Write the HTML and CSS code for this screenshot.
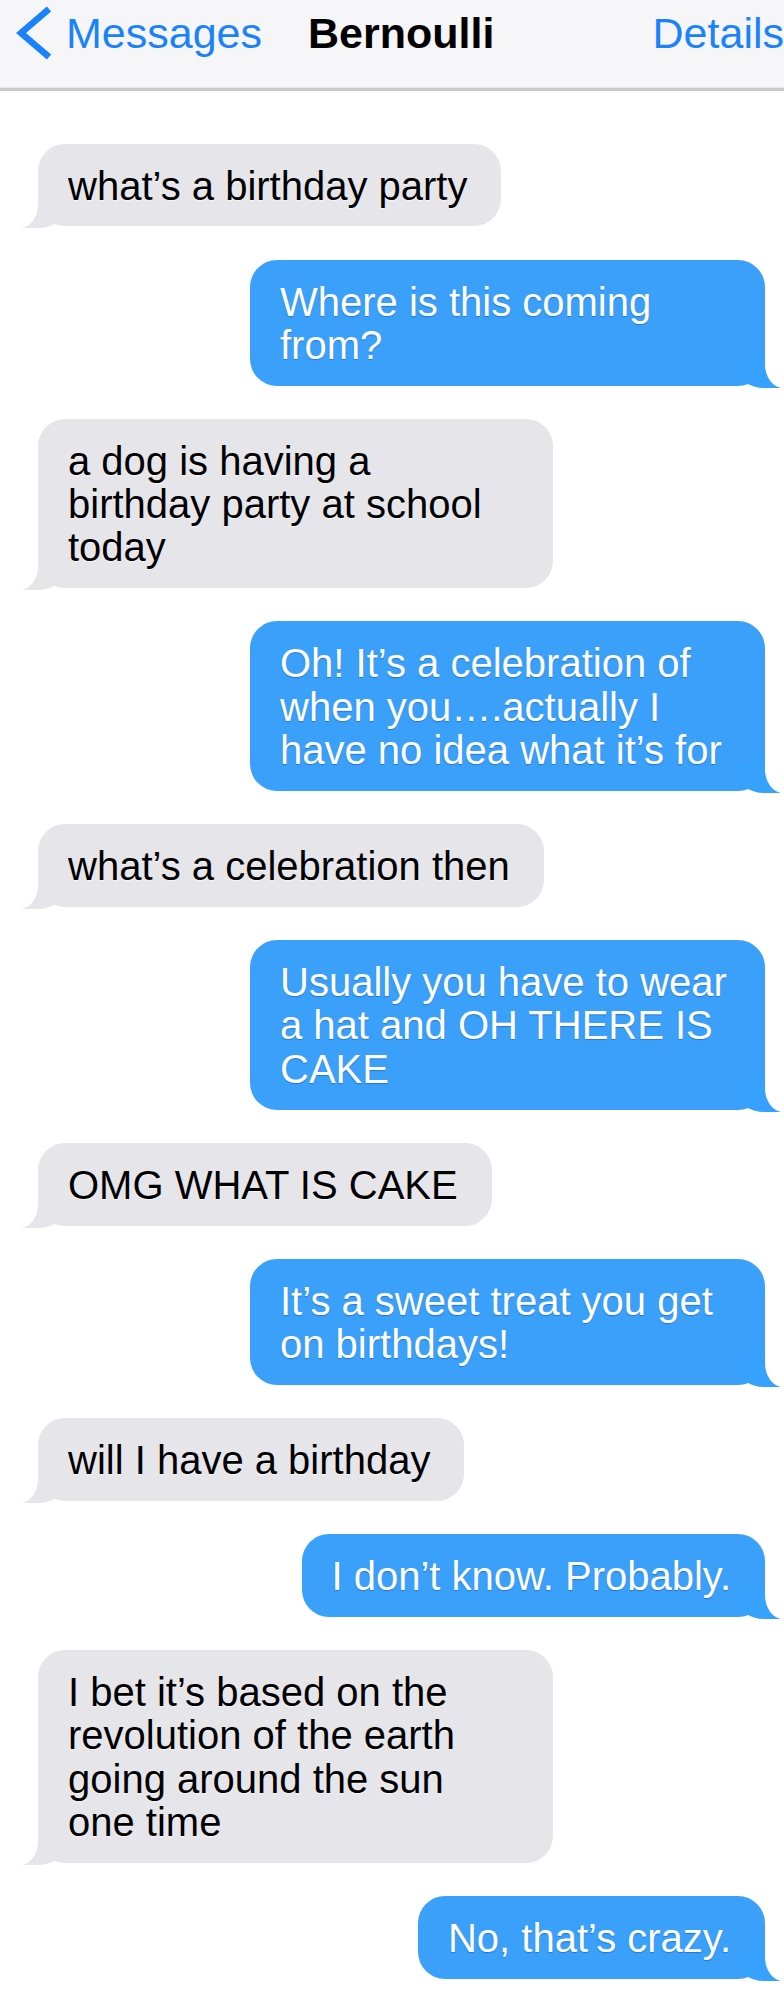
FILE: index.html
```html
<!DOCTYPE html>
<html lang="en">

<head>
    <meta charset="UTF-8">
    <meta name="viewport" content="width=device-width, initial-scale=1.0">
    <title>Bernoulli</title>

    <link rel="stylesheet" href="styles.css">
</head>

<body>

    <header class="nav">
        <a class="nav-back" href="#">
            <svg class="chevron" width="40" height="56" viewBox="0 0 40 56">
                <polyline points="35,4 7,28 35,52" />
            </svg>
            <span>Messages</span>
        </a>
        <h1 class="nav-title">Bernoulli</h1>
        <a class="nav-action" href="#">Details</a>
    </header>

    <main class="thread">
        <p class="bubble them">what’s a birthday party</p>
        <p class="bubble me">Where is this coming from?</p>
        <p class="bubble them">a dog is having a birthday party at school today</p>
        <p class="bubble me">Oh! It’s a celebration of when you….actually I have no idea what it’s for</p>
        <p class="bubble them">what’s a celebration then</p>
        <p class="bubble me">Usually you have to wear a hat and OH THERE IS CAKE</p>
        <p class="bubble them">OMG WHAT IS CAKE</p>
        <p class="bubble me">It’s a sweet treat you get on birthdays!</p>
        <p class="bubble them">will I have a birthday</p>
        <p class="bubble me">I don’t know. Probably.</p>
        <p class="bubble them">I bet it’s based on the revolution of the earth going around the sun one time</p>
        <p class="bubble me">No, that’s crazy.</p>
    </main>

</body>

</html>
```

FILE: styles.css
```css
* {
    font-family: 'Liberation Sans', Arial, sans-serif;
    box-sizing: border-box;
}

html,
body {
    margin: 0;
    padding: 0;
    background: #fff;
}

/* barra de navegação */
.nav {
    display: flex;
    align-items: flex-start;
    height: 91px;
    padding-top: 12px;
    background: #f6f6f8;
    border-bottom: 3px solid #c9c9cc;
    box-shadow: inset 0 -1px 0 #e7e7ea;
    font-size: 43px;
    line-height: 43px;
}

.nav a {
    color: #1a82fb;
    text-decoration: none;
}

.nav-back {
    display: flex;
    align-items: flex-start;
    gap: 12px;
    margin-left: 14px;
}

.chevron {
    margin-top: -7px;
}

.chevron polyline {
    fill: none;
    stroke: #1a82fb;
    stroke-width: 6.5;
}

.nav-title {
    margin: 0 0 0 46px;
    font-size: 43px;
    line-height: 43px;
    font-weight: bold;
    color: #000;
}

.nav-action {
    margin-left: auto;
}

/* conversa */
.thread {
    display: flex;
    flex-direction: column;
    gap: 33.15px;
    padding: 52.5px 19px 40px 38px;
}

.bubble {
    position: relative;
    max-width: 515px;
    margin: 0;
    padding: 21px 34px 18.6px 30px;
    border-radius: 27px;
    font-size: 40px;
    line-height: 43.3px;
}

.them {
    align-self: flex-start;
    background: #e5e5ea;
    color: #000;
    text-shadow: 0 1px 1px rgba(255, 255, 255, 0.7);
}

.me {
    align-self: flex-end;
    background: #3ba0fa;
    color: #fff;
    text-shadow: 0 1px 1px rgba(0, 70, 170, 0.45);
}

/* rabinho do balão */
.bubble::before,
.bubble::after {
    content: '';
    position: absolute;
    bottom: -2px;
    height: 30px;
}

.them::before {
    left: -16px;
    width: 42px;
    background: #e5e5ea;
    border-bottom-right-radius: 26px 20px;
}

.them::after {
    left: -42px;
    width: 42px;
    background: #fff;
    border-bottom-right-radius: 18px 24px;
}

.me::before {
    right: -15px;
    width: 42px;
    background: #36a2fd;
    border-bottom-left-radius: 26px 20px;
}

.me::after {
    right: -42px;
    width: 42px;
    background: #fff;
    border-bottom-left-radius: 18px 24px;
}
```
